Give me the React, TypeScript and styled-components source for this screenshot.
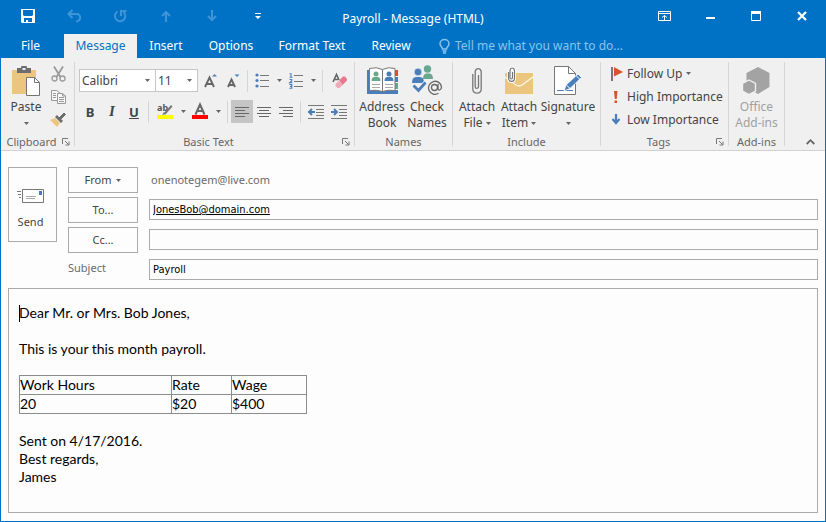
import React from "react";
import styled, { createGlobalStyle, css } from "styled-components";

const BLUE = "#0072c6";
const RIBBON = "#f0f0f0";
const LINE = "#ababab";
const GREY = "#6a6a6a";
const ICON_BLUE = "#4a7ebb";
const TAN = "#ecc580";
const GREEN = "#6aa78f";

const GlobalStyle = createGlobalStyle`
  * { box-sizing: border-box; }
  body { margin: 0; background: #fff; }
  button, input, select { font: inherit; color: inherit; margin: 0; padding: 0; }
  svg { display: block; flex: none; overflow: visible; }
`;

const Window = styled.div`
  min-height: 100vh;
  display: flex;
  flex-direction: column;
  border: 1px solid ${BLUE};
  border-top: 0;
  background: #fdfdfd;
  color: #444;
  font: 12px/16px "Noto Sans", "Open Sans", sans-serif;
`;

const TitleBar = styled.header`
  display: grid;
  grid-template-columns: 1fr auto 1fr;
  height: 34px;
  background: ${BLUE};
  color: #fff;
`;

const QuickAccess = styled.div`
  display: flex;
  padding-left: 4px;
`;

const WindowControls = styled.div`
  display: flex;
  justify-content: flex-end;
`;

const BarButton = styled.button<{ $faded?: boolean }>`
  width: 46px;
  height: 32px;
  border: 0;
  background: none;
  display: flex;
  align-items: center;
  justify-content: center;
  color: ${(p) => (p.$faded ? "#3d95d6" : "#fff")};
`;

const Title = styled.h1`
  margin: 0;
  font-size: 12px;
  font-weight: 400;
  line-height: 38px;
  white-space: nowrap;
`;

const TabStrip = styled.nav`
  display: flex;
  height: 24px;
  background: ${BLUE};
  color: #fff;
`;

const Tab = styled.button<{ $width: number; $active?: boolean }>`
  width: ${(p) => p.$width}px;
  border: 0;
  white-space: nowrap;
  background: ${(p) => (p.$active ? RIBBON : "none")};
  color: ${(p) => (p.$active ? BLUE : "#fff")};
  &:first-child { margin-right: 4px; }
`;

const TellMe = styled.label`
  display: flex;
  flex: 1;
  align-items: center;
  gap: 5px;
  padding-left: 14px;
  color: #8cc3ec;
  input {
    flex: 1;
    border: 0;
    background: none;
    outline: 0;
  }
  input::placeholder { color: #8cc3ec; opacity: 1; }
`;

const Ribbon = styled.section`
  display: flex;
  height: 93px;
  background: ${RIBBON};
  border-bottom: 1px solid #d2d2d2;
`;

const Group = styled.div<{ $width: number }>`
  display: flex;
  flex-direction: column;
  width: ${(p) => p.$width}px;
  padding-top: 4px;
`;

const GroupBody = styled.div<{ $pad?: number }>`
  display: flex;
  flex: 1;
  padding-left: ${(p) => p.$pad ?? 0}px;
`;

const GroupFooter = styled.div`
  display: flex;
  align-items: center;
  height: 16px;
  color: #666;
  font-size: 11px;
  span { flex: 1; text-align: center; white-space: nowrap; }
`;

const Launcher = styled.button`
  width: 12px;
  height: 14px;
  border: 0;
  background: none;
`;

const GroupDivider = styled.div`
  width: 1px;
  margin: 4px 0;
  background: #d5d5d5;
`;

const LargeButton = styled.button<{ $width: number; $muted?: boolean }>`
  display: flex;
  flex-direction: column;
  align-items: center;
  width: ${(p) => p.$width}px;
  border: 0;
  background: none;
  white-space: nowrap;
  color: ${(p) => (p.$muted ? "#a0a0a0" : "#444")};
`;

const LargeIcon = styled.span`
  display: flex;
  align-items: center;
  justify-content: center;
  height: 37px;
`;

const LabelLine = styled.span`
  display: flex;
  align-items: center;
  justify-content: center;
  gap: 3px;
  height: 16px;
`;

const SmallColumn = styled.div`
  display: flex;
  flex-direction: column;
  width: 16px;
`;

const SmallButton = styled.button`
  display: flex;
  align-items: center;
  justify-content: center;
  height: 23px;
  border: 0;
  background: none;
`;

const ToolRows = styled.div`
  display: flex;
  flex-direction: column;
  gap: 8px;
  padding-top: 7px;
`;

const ToolRow = styled.div`
  display: flex;
  align-items: center;
  height: 23px;
`;

const Tool = styled.button<{ $width: number; $active?: boolean }>`
  display: flex;
  align-items: center;
  justify-content: center;
  width: ${(p) => p.$width}px;
  height: 23px;
  border: 0;
  background: ${(p) => (p.$active ? "#c5c5c5" : "none")};
  font-size: 13px;
  font-weight: 700;
  i { font: italic 700 15px "Liberation Serif", serif; }
`;

const ToolDivider = styled.span`
  width: 1px;
  height: 22px;
  margin: 0 3px;
  background: #d5d5d5;
`;

const Picker = styled.span<{ $width: number }>`
  display: flex;
  align-items: center;
  width: ${(p) => p.$width}px;
  height: 23px;
  padding-right: 5px;
  border: 1px solid #c6c6c6;
  background: #fff;
  & + & { margin-left: -1px; }
  select {
    flex: 1;
    min-width: 0;
    padding-left: 2px;
    border: 0;
    appearance: none;
    background: none;
    outline: 0;
  }
`;

const TagList = styled.div`
  display: flex;
  flex-direction: column;
`;

const TagButton = styled.button`
  display: grid;
  grid-template-columns: 12px auto auto 1fr;
  align-items: center;
  column-gap: 4px;
  height: 23px;
  border: 0;
  background: none;
  text-align: left;
  white-space: nowrap;
`;

const CollapseArea = styled.div`
  display: flex;
  flex: 1;
  align-items: flex-end;
  justify-content: flex-end;
  padding: 0 7px 1px 0;
`;

const Compose = styled.form`
  display: grid;
  grid-template-columns: 49px 70px 1fr;
  grid-template-rows: repeat(4, 26px);
  align-items: center;
  gap: 4px 11px;
  padding: 16px 7px 5px;
`;

const outlined = css`
  border: 1px solid ${LINE};
  background: #fdfdfd;
`;

const SendButton = styled.button`
  ${outlined}
  display: flex;
  flex-direction: column;
  align-items: center;
  gap: 11px;
  grid-row: 1 / 4;
  align-self: start;
  height: 75px;
  padding-top: 21px;
  padding-right: 4px;
  font-size: 11px;
`;

const RecipientButton = styled.button`
  ${outlined}
  display: flex;
  align-items: center;
  justify-content: center;
  gap: 5px;
  height: 26px;
  font-size: 11px;
`;

const SenderAddress = styled.span`
  padding-left: 2px;
  color: ${GREY};
  font-size: 11px;
`;

const FieldLabel = styled.label`
  align-self: start;
  margin-top: 3px;
  color: ${GREY};
  font-size: 11px;
`;

const Field = styled.input<{ $resolved?: boolean }>`
  ${outlined}
  align-self: start;
  width: 100%;
  height: 21px;
  margin-top: 2px;
  padding: 0 3px;
  outline: 0;
  color: #000;
  font-family: "DejaVu Sans Condensed", "Noto Sans", sans-serif;
  font-size: 11px;
  text-decoration: ${(p) => (p.$resolved ? "underline" : "none")};
`;

const Message = styled.main`
  ${outlined}
  position: relative;
  flex: 1;
  margin: 0 7px 8px;
  padding: 15px 10px;
  color: #000;
  font: 14px/18px Lato, "Noto Sans", sans-serif;
  p { margin: 0 0 18px; }
`;

const Caret = styled.span`
  position: absolute;
  left: 10px;
  top: 16px;
  width: 1px;
  height: 17px;
  background: #000;
`;

const PayTable = styled.table`
  margin: -1px 0 18px;
  border-collapse: collapse;
  table-layout: fixed;
  width: 288px;
  th, td {
    height: 19px;
    padding: 0;
    border: 1px solid #8c8c8c;
    font-weight: 400;
    text-align: left;
    line-height: 18px;
  }
`;

const DownArrow = () => (
  <svg width="5" height="3" viewBox="0 0 5 3" aria-hidden="true">
    <path d="M0 0h5L2.5 3z" fill="#666" />
  </svg>
);

const LauncherIcon = () => (
  <svg width="8" height="8" viewBox="0 0 8 8" fill="none" stroke="#777">
    <path d="M.5 6V.5H6M3 3l3.5 3.5M7 3.5V7H3.5" />
  </svg>
);

const SaveIcon = () => (
  <svg width="14" height="14" viewBox="0 0 14 14">
    <path fillRule="evenodd" fill="#fff" d="M0 0h14v14H1L0 13zM2 1v5l1 1h8l1-1V1zM3 9v4h2v-2h2v2h4V9z" />
  </svg>
);

const UndoIcon = () => (
  <svg width="15" height="14" viewBox="0 0 15 14" fill="none" stroke="currentColor" strokeWidth="2">
    <path d="M5.5 1 1.5 5l4 4M2 5h7.5c5 0 5 7-.5 7.500" />
  </svg>
);

const RedoIcon = () => (
  <svg width="14" height="14" viewBox="0 0 14 14" fill="none" stroke="currentColor" strokeWidth="2">
    <path d="M4.500 2.500A5.200 5.200 0 1 0 10.500 3M8 7V2h5.500" />
  </svg>
);

const VerticalArrow = ({ down }: { down?: boolean }) => (
  <svg width="10" height="12" viewBox="0 0 10 12" fill="none" stroke="currentColor" strokeWidth="2">
    <path d={down ? "M5 0v10M1 6l4 4 4-4" : "M5 12V2M1 6l4-4 4 4"} />
  </svg>
);

const CustomizeIcon = () => (
  <svg width="6" height="7" viewBox="0 0 6 7" fill="#fff">
    <path d="M0 0h6v1H0zM0 3h6L3 6z" />
  </svg>
);

const RibbonOptionsIcon = () => (
  <svg width="13" height="10" viewBox="0 0 13 10" fill="none" stroke="#fff">
    <path d="M.5.5h12v9H.5zM0 2.500h13M6.500 9V4.500M4 6.500l2.500-2 2.500 2" />
  </svg>
);

const MinimizeIcon = () => (
  <svg width="9" height="10" viewBox="0 0 9 10"><path d="M0 6h9v2H0z" fill="#fff" /></svg>
);

const MaximizeIcon = () => (
  <svg width="10" height="10" viewBox="0 0 10 10">
    <path d="M.5.5h9v9h-9z" fill="none" stroke="#fff" />
    <path d="M0 0h10v3H0z" fill="#fff" />
  </svg>
);

const CloseIcon = () => (
  <svg width="10" height="10" viewBox="0 0 10 10">
    <path d="m1 1 8 8M9 1 1 9" stroke="#fff" strokeWidth="2.200" />
  </svg>
);

const BulbIcon = () => (
  <svg width="11" height="15" viewBox="0 0 11 15" fill="none" stroke="currentColor" strokeWidth="1.500">
    <path d="M3.500 10C3.500 8 1 7.500 1 4.800a4.500 4.200 0 0 1 9 0C10 7.500 7.500 8 7.500 10zM3.500 12h4M4 14h3" />
  </svg>
);

const PasteIcon = () => (
  <svg width="28" height="30" viewBox="0 0 28 30">
    <path d="M0 4h24v24H0z" fill={TAN} />
    <path d="M5 2h4V1q0-1 1-1h4q1 0 1 1v1h4v5H5z" fill="#6d6d6d" />
    <path d="M10.500 2h3v2h-3z" fill="#f0f0f0" />
    <path d="M14.500 11.500h8l5 5v13h-13z" fill="#fff" stroke="#747474" />
    <path d="M22.500 11.500v5h5" fill="none" stroke="#747474" />
  </svg>
);

const CutIcon = () => (
  <svg width="15" height="16" viewBox="0 0 15 16" fill="none" stroke="#999">
    <path d="M3 .5 9.500 11M12 .5 5.500 11" strokeWidth="1.800" />
    <circle cx="3.500" cy="12.500" r="2.500" strokeWidth="1.300" />
    <circle cx="11.500" cy="12.500" r="2.500" strokeWidth="1.300" />
  </svg>
);

const CopyIcon = () => (
  <svg width="15" height="14" viewBox="0 0 15 14" stroke="#999">
    <path d="M.5.500h5l3 2v8h-8z" fill="#f8f8f8" />
    <path d="M2 3.500h3M2 5.500h3M2 7.500h3" />
    <path d="M6.500 3.500h5l3 2.500v7.500h-8z" fill="#f8f8f8" />
    <path d="M11.500 3.500V6h3M8 7.500h5M8 9.500h5M8 11.500h5" fill="none" />
  </svg>
);

const BrushIcon = () => (
  <svg width="16" height="15" viewBox="0 0 16 15">
    <path d="m0 8 5-2 5 5-3 4z" fill={TAN} />
    <path d="m5 5 2-2 6 6-2 2z" fill="#6d6d6d" />
    <path d="m9 6 5-5 1.500 1.500-5 5z" fill="#6d6d6d" stroke="#6d6d6d" />
  </svg>
);

const SizeIcon = ({ grow }: { grow?: boolean }) => (
  <svg width="14" height="16" viewBox="0 0 14 16" fill="none">
    <path
      d={grow ? "M1 14 5.500 4.500l4.500 9.500M2.500 11h6" : "M1 14 4.500 6.500 8 14M2.500 12h4"}
      stroke="#666"
      strokeWidth="1.900"
    />
    <path d={grow ? "M8 3.500h5L10.500 1z" : "M7.500 1.500h5L10 4z"} fill={ICON_BLUE} />
  </svg>
);

const BulletsIcon = () => (
  <svg width="14" height="15" viewBox="0 0 14 15">
    <g fill={ICON_BLUE}>
      <circle cx="2" cy="2" r="1.600" /><circle cx="2" cy="7.500" r="1.600" /><circle cx="2" cy="13" r="1.600" />
    </g>
    <path d="M5 2.500h9M5 7.500h9M5 13.500h9" stroke="#777" />
  </svg>
);

const NumberingIcon = () => (
  <svg width="14" height="16" viewBox="0 0 14 16">
    <g fill="none" stroke={ICON_BLUE} strokeWidth="1.100">
      <path d="M.5 .8h1.500V4M.5 4.300h3M.5 6.500h2.300v1.200L.7 9.600h2.600M.3 11.500h2.500v3.800H.3M1 13.400h1.800" />
    </g>
    <path d="M5 2.500h9M5 8.500h9M5 13.500h9" stroke="#777" />
  </svg>
);

const EraserIcon = () => (
  <svg width="15" height="16" viewBox="0 0 15 16">
    <path d="M1 9 4.500 1.500 7 7M2 6.500h4" fill="none" stroke="#666" strokeWidth="1.600" />
    <path d="m3.500 11 3-3 4 4-3 3H5.500L3.500 13z" fill="#f2a8b6" />
    <path d="m7 7.500 4-4h2L15 6v1.500l-4.500 4.500z" fill="#e8788e" />
  </svg>
);

const HighlightIcon = () => (
  <svg width="16" height="17" viewBox="0 0 16 17">
    <text x="0" y="8" fontSize="9" fontWeight="700" fill="#555">ab</text>
    <path d="m7 10 7-8 1.500 1.500-7 8z" fill="#777" />
    <path d="m5 12 2-3 2 2z" fill="#777" />
    <path d="M0 12h16v4H0z" fill="#ff0" />
  </svg>
);

const FontColorIcon = () => (
  <svg width="16" height="17" viewBox="0 0 16 17">
    <path d="M3.500 11.500 8 1.500l4.500 10M5 8h6" fill="none" stroke="#666" strokeWidth="2" />
    <path d="M0 12h16v4H0z" fill="red" />
  </svg>
);

const AlignIcon = ({ d }: { d: string }) => (
  <svg width="14" height="10" viewBox="0 0 14 10"><path d={d} stroke="#666" /></svg>
);

const IndentIcon = ({ out }: { out?: boolean }) => (
  <svg width="16" height="14" viewBox="0 0 16 14" fill="none">
    <path d="M0 .5h16M8 4.500h8M8 7.500h8M8 10.500h8M0 13.500h16" stroke="#777" />
    <path d={out ? "M7 7H1M4 4 1 7l3 3" : "M0 7h6M3 4l3 3-3 3"} stroke={ICON_BLUE} strokeWidth="2" />
  </svg>
);

const AddressBookIcon = () => (
  <svg width="31" height="27" viewBox="0 0 31 27">
    <path d="M0 3h31v24H0z" fill={ICON_BLUE} />
    <path d="M28 3h3v6h-3z" fill="#d8532c" />
    <path d="M28 9h3v1h-3zM28 15h3v1h-3zM28 22h3v1h-3z" fill="#fff" />
    <path d="M28 16h3v6h-3z" fill={GREEN} />
    <path d="M2.500 1.500q7-2 13 1 6-3 12.500-1v22q-7-1-12.500 1-6-2-13-1z" fill="#fff" stroke="#777" />
    <path d="M15.500 2.500V25" stroke="#777" />
    <circle cx="9" cy="7" r="2.500" fill={GREEN} />
    <path d="M4.500 14q0-4 3-4h3q3 0 3 4z" fill={GREEN} />
    <circle cx="22" cy="7" r="2.500" fill={ICON_BLUE} />
    <path d="M17.500 14q0-4 3-4h3q3 0 3 4z" fill={ICON_BLUE} />
    <path d="M5 17.500h8M5 20.500h8M18 17.500h8M18 20.500h8" stroke="#aaa" />
  </svg>
);

const CheckNamesIcon = () => (
  <svg width="31" height="31" viewBox="0 0 31 31">
    <circle cx="15.500" cy="4" r="3.700" fill={GREEN} />
    <path d="M11 14q0-5.500 4-5.500h2q4 0 4 5.500z" fill={GREEN} />
    <circle cx="6" cy="7" r="3.800" fill={ICON_BLUE} stroke="#f0f0f0" strokeWidth=".6" />
    <path d="M0 18q0-6 4-6h4q4 0 4 6z" fill={ICON_BLUE} />
    <path d="m1.500 20 5 5.500 7.500-8" fill="none" stroke="#f0f0f0" strokeWidth="5" />
    <path d="m1.500 20.500 5 5 7-8" fill="none" stroke={ICON_BLUE} strokeWidth="2.800" />
    <circle cx="23" cy="23" r="7.500" fill="#f0f0f0" />
    <g fill="none" stroke="#666" strokeWidth="1.300">
      <circle cx="22.500" cy="22.500" r="3" />
      <path d="M26 19v4.500c0 2.500 3.500 2 3.500-1.500a6.500 6.500 0 1 0-3 6.300" />
    </g>
  </svg>
);

const clipPath = "M.8 7v15c0 5.500 8.400 5.500 8.400 0V5c0-4.500-6-4.500-6 0v14.500c0 2.500 3.300 2.500 3.300 0V8";

const AttachFileIcon = () => (
  <svg width="10" height="27" viewBox="0 0 10 27" fill="none">
    <path d={clipPath} stroke="#777" strokeWidth="1.300" />
  </svg>
);

const AttachItemIcon = () => (
  <svg width="28" height="28" viewBox="0 0 28 28" fill="none">
    <path d="M0 6h28v21H0z" fill={TAN} />
    <path d="m0 10 11 8q3 2 6 0l11-8" stroke="#fff7e6" strokeWidth="1.300" />
    <path d="M3.500 5v6c0 4.500 6 4.500 6 0V4c0-4-4.500-4-4.500 0v6.500c0 2 2.500 2 2.500 0V5" stroke="#fff" strokeWidth="3" />
    <path d="M3.500 5v6c0 4.500 6 4.500 6 0V4c0-4-4.500-4-4.500 0v6.500c0 2 2.500 2 2.500 0V5" stroke="#777" strokeWidth="1.200" />
  </svg>
);

const SignatureIcon = () => (
  <svg width="28" height="29" viewBox="0 0 28 29">
    <path d="M.5.5h14l7 7v21H.5z" fill="#fff" stroke="#777" />
    <path d="M14.500.5v7h7" fill="none" stroke="#777" />
    <path d="M3 24.500h16" stroke={ICON_BLUE} />
    <path d="m10 25 2-6L24 8l3.500 3.500L16 22.500z" fill={ICON_BLUE} stroke="#fff" strokeWidth=".8" />
    <path d="m22 9.500 4 4M12.500 19l3 3" stroke="#fff" />
  </svg>
);

const FlagIcon = () => (
  <svg width="12" height="14" viewBox="0 0 12 14">
    <path d="M0 0h2v14H0z" fill="#777" /><path d="m3 0 9 5-9 4.500z" fill="#d8532c" />
  </svg>
);

const HighIcon = () => (
  <svg width="12" height="12" viewBox="0 0 12 12"><path d="M3 0h3.500L5.700 8H3.800zM3.500 9.500h2.500V12H3.500z" fill="#d8532c" /></svg>
);

const LowIcon = () => (
  <svg width="12" height="11" viewBox="0 0 12 11" fill="none">
    <path d="M5 0v9M1.500 5 5 9l3.500-4" stroke={ICON_BLUE} strokeWidth="2.200" />
  </svg>
);

const AddinsIcon = () => (
  <svg width="27" height="28" viewBox="0 0 27 28" fill="#a3a3a3">
    <path d="m15 0 11.500 6v14L15 27 3.500 20V6z" />
    <path d="m6 13 6.500 3.500v7.500L6 27.700-.5 24v-7.500z" stroke="#f0f0f0" strokeWidth="1.400" />
  </svg>
);

const CollapseIcon = () => (
  <svg width="9" height="6" viewBox="0 0 9 6" fill="none"><path d="m.7 5 3.800-3.800L8.300 5" stroke="#666" strokeWidth="1.800" /></svg>
);

const SendIcon = () => (
  <svg width="27" height="14" viewBox="0 0 27 14" fill="none">
    <path d="M0 2.500h4M1 5.500h3M2 8.500h2" stroke="#777" strokeWidth="1.200" />
    <path d="M5.500.5h21v13h-21z" fill="#fff" stroke="#777" />
    <path d="M9 7.500h10M9 9.500h9" stroke="#aaa" />
    <path d="M22 2h3v4h-3z" fill={ICON_BLUE} />
  </svg>
);

function RibbonGroup(props: { label: string; width: number; pad?: number; launcher?: boolean; children: React.ReactNode }) {
  return (
    <>
      <Group $width={props.width}>
        <GroupBody $pad={props.pad}>{props.children}</GroupBody>
        <GroupFooter>
          <span>{props.label}</span>
          {props.launcher && <Launcher type="button" aria-label={`${props.label} options`}><LauncherIcon /></Launcher>}
        </GroupFooter>
      </Group>
      <GroupDivider />
    </>
  );
}

const payRows = [["20", "$20", "$400"]];

export default function App() {
  return (
    <Window>
      <GlobalStyle />
      <TitleBar>
        <QuickAccess>
          <BarButton aria-label="Save"><SaveIcon /></BarButton>
          <BarButton $faded aria-label="Undo"><UndoIcon /></BarButton>
          <BarButton $faded aria-label="Redo"><RedoIcon /></BarButton>
          <BarButton $faded aria-label="Previous item"><VerticalArrow /></BarButton>
          <BarButton $faded aria-label="Next item"><VerticalArrow down /></BarButton>
          <BarButton aria-label="Customize toolbar"><CustomizeIcon /></BarButton>
        </QuickAccess>
        <Title>Payroll - Message (HTML)</Title>
        <WindowControls>
          <BarButton aria-label="Ribbon display options"><RibbonOptionsIcon /></BarButton>
          <BarButton aria-label="Minimize"><MinimizeIcon /></BarButton>
          <BarButton aria-label="Maximize"><MaximizeIcon /></BarButton>
          <BarButton aria-label="Close"><CloseIcon /></BarButton>
        </WindowControls>
      </TitleBar>

      <TabStrip>
        <Tab $width={59}>File</Tab>
        <Tab $width={73} $active>Message</Tab>
        <Tab $width={58}>Insert</Tab>
        <Tab $width={72}>Options</Tab>
        <Tab $width={90}>Format Text</Tab>
        <Tab $width={68}>Review</Tab>
        <TellMe>
          <BulbIcon />
          <input aria-label="Tell me" placeholder="Tell me what you want to do..." />
        </TellMe>
      </TabStrip>

      <Ribbon>
        <RibbonGroup label="Clipboard" width={73} pad={1} launcher>
          <LargeButton $width={48}>
            <LargeIcon><PasteIcon /></LargeIcon>
            <LabelLine>Paste</LabelLine>
            <LabelLine><DownArrow /></LabelLine>
          </LargeButton>
          <SmallColumn>
            <SmallButton aria-label="Cut"><CutIcon /></SmallButton>
            <SmallButton aria-label="Copy"><CopyIcon /></SmallButton>
            <SmallButton aria-label="Format painter"><BrushIcon /></SmallButton>
          </SmallColumn>
        </RibbonGroup>

        <RibbonGroup label="Basic Text" width={279} pad={4} launcher>
          <ToolRows>
            <ToolRow>
              <Picker $width={77}>
                <select aria-label="Font"><option>Calibri</option></select>
                <DownArrow />
              </Picker>
              <Picker $width={43}>
                <select aria-label="Font size"><option>11</option></select>
                <DownArrow />
              </Picker>
              <Tool $width={26} aria-label="Grow font"><SizeIcon grow /></Tool>
              <Tool $width={20} aria-label="Shrink font"><SizeIcon /></Tool>
              <ToolDivider />
              <Tool $width={22} aria-label="Bullets"><BulletsIcon /></Tool>
              <Tool $width={12} aria-label="Bullet styles"><DownArrow /></Tool>
              <Tool $width={22} aria-label="Numbering"><NumberingIcon /></Tool>
              <Tool $width={12} aria-label="Numbering styles"><DownArrow /></Tool>
              <ToolDivider />
              <Tool $width={26} aria-label="Clear formatting"><EraserIcon /></Tool>
            </ToolRow>
            <ToolRow>
              <Tool $width={22}>B</Tool>
              <Tool $width={22}><i>I</i></Tool>
              <Tool $width={22}><u>U</u></Tool>
              <ToolDivider />
              <Tool $width={26} aria-label="Highlight"><HighlightIcon /></Tool>
              <Tool $width={10} aria-label="Highlight colors"><DownArrow /></Tool>
              <Tool $width={24} aria-label="Font color"><FontColorIcon /></Tool>
              <Tool $width={12} aria-label="Font colors"><DownArrow /></Tool>
              <ToolDivider />
              <Tool $width={22} $active aria-label="Align left"><AlignIcon d="M0 .5h14M0 3.500h10M0 6.500h14M0 9.500h10" /></Tool>
              <Tool $width={22} aria-label="Center"><AlignIcon d="M0 .5h14M2 3.500h10M0 6.500h14M2 9.500h10" /></Tool>
              <Tool $width={22} aria-label="Align right"><AlignIcon d="M0 .5h14M4 3.500h10M0 6.500h14M4 9.500h10" /></Tool>
              <ToolDivider />
              <Tool $width={24} aria-label="Decrease indent"><IndentIcon out /></Tool>
              <Tool $width={22} aria-label="Increase indent"><IndentIcon /></Tool>
            </ToolRow>
          </ToolRows>
        </RibbonGroup>

        <RibbonGroup label="Names" width={97} pad={3}>
          <LargeButton $width={48}>
            <LargeIcon><AddressBookIcon /></LargeIcon>
            <LabelLine>Address</LabelLine>
            <LabelLine>Book</LabelLine>
          </LargeButton>
          <LargeButton $width={42}>
            <LargeIcon><CheckNamesIcon /></LargeIcon>
            <LabelLine>Check</LabelLine>
            <LabelLine>Names</LabelLine>
          </LargeButton>
        </RibbonGroup>

        <RibbonGroup label="Include" width={147} pad={3}>
          <LargeButton $width={42}>
            <LargeIcon><AttachFileIcon /></LargeIcon>
            <LabelLine>Attach</LabelLine>
            <LabelLine>File <DownArrow /></LabelLine>
          </LargeButton>
          <LargeButton $width={42}>
            <LargeIcon><AttachItemIcon /></LargeIcon>
            <LabelLine>Attach</LabelLine>
            <LabelLine>Item <DownArrow /></LabelLine>
          </LargeButton>
          <LargeButton $width={56}>
            <LargeIcon><SignatureIcon /></LargeIcon>
            <LabelLine>Signature</LabelLine>
            <LabelLine><DownArrow /></LabelLine>
          </LargeButton>
        </RibbonGroup>

        <RibbonGroup label="Tags" width={127} pad={10} launcher>
          <TagList>
            <TagButton><FlagIcon /><span>Follow Up</span><DownArrow /></TagButton>
            <TagButton><HighIcon /><span>High Importance</span></TagButton>
            <TagButton><LowIcon /><span>Low Importance</span></TagButton>
          </TagList>
        </RibbonGroup>

        <RibbonGroup label="Add-ins" width={55}>
          <LargeButton $width={55} $muted>
            <LargeIcon><AddinsIcon /></LargeIcon>
            <LabelLine>Office</LabelLine>
            <LabelLine>Add-ins</LabelLine>
          </LargeButton>
        </RibbonGroup>

        <CollapseArea>
          <Launcher aria-label="Collapse ribbon"><CollapseIcon /></Launcher>
        </CollapseArea>
      </Ribbon>

      <Compose onSubmit={(e) => e.preventDefault()}>
        <SendButton type="submit"><SendIcon />Send</SendButton>
        <RecipientButton type="button">From <DownArrow /></RecipientButton>
        <SenderAddress>onenotegem@live.com</SenderAddress>
        <RecipientButton type="button">To...</RecipientButton>
        <Field $resolved aria-label="To" defaultValue="JonesBob@domain.com" spellCheck={false} />
        <RecipientButton type="button">Cc...</RecipientButton>
        <Field aria-label="Cc" />
        <span />
        <FieldLabel htmlFor="subject">Subject</FieldLabel>
        <Field id="subject" defaultValue="Payroll" spellCheck={false} />
      </Compose>

      <Message>
        <Caret />
        <p>Dear Mr. or Mrs. Bob Jones,</p>
        <p>This is your this month payroll.</p>
        <PayTable>
          <colgroup><col width="152" /><col width="60" /><col width="75" /></colgroup>
          <thead>
            <tr><th>Work Hours</th><th>Rate</th><th>Wage</th></tr>
          </thead>
          <tbody>
            {payRows.map((row) => (
              <tr key={row[0]}>{row.map((cell) => <td key={cell}>{cell}</td>)}</tr>
            ))}
          </tbody>
        </PayTable>
        Sent on 4/17/2016.<br />
        Best regards,<br />
        James
      </Message>
    </Window>
  );
}
